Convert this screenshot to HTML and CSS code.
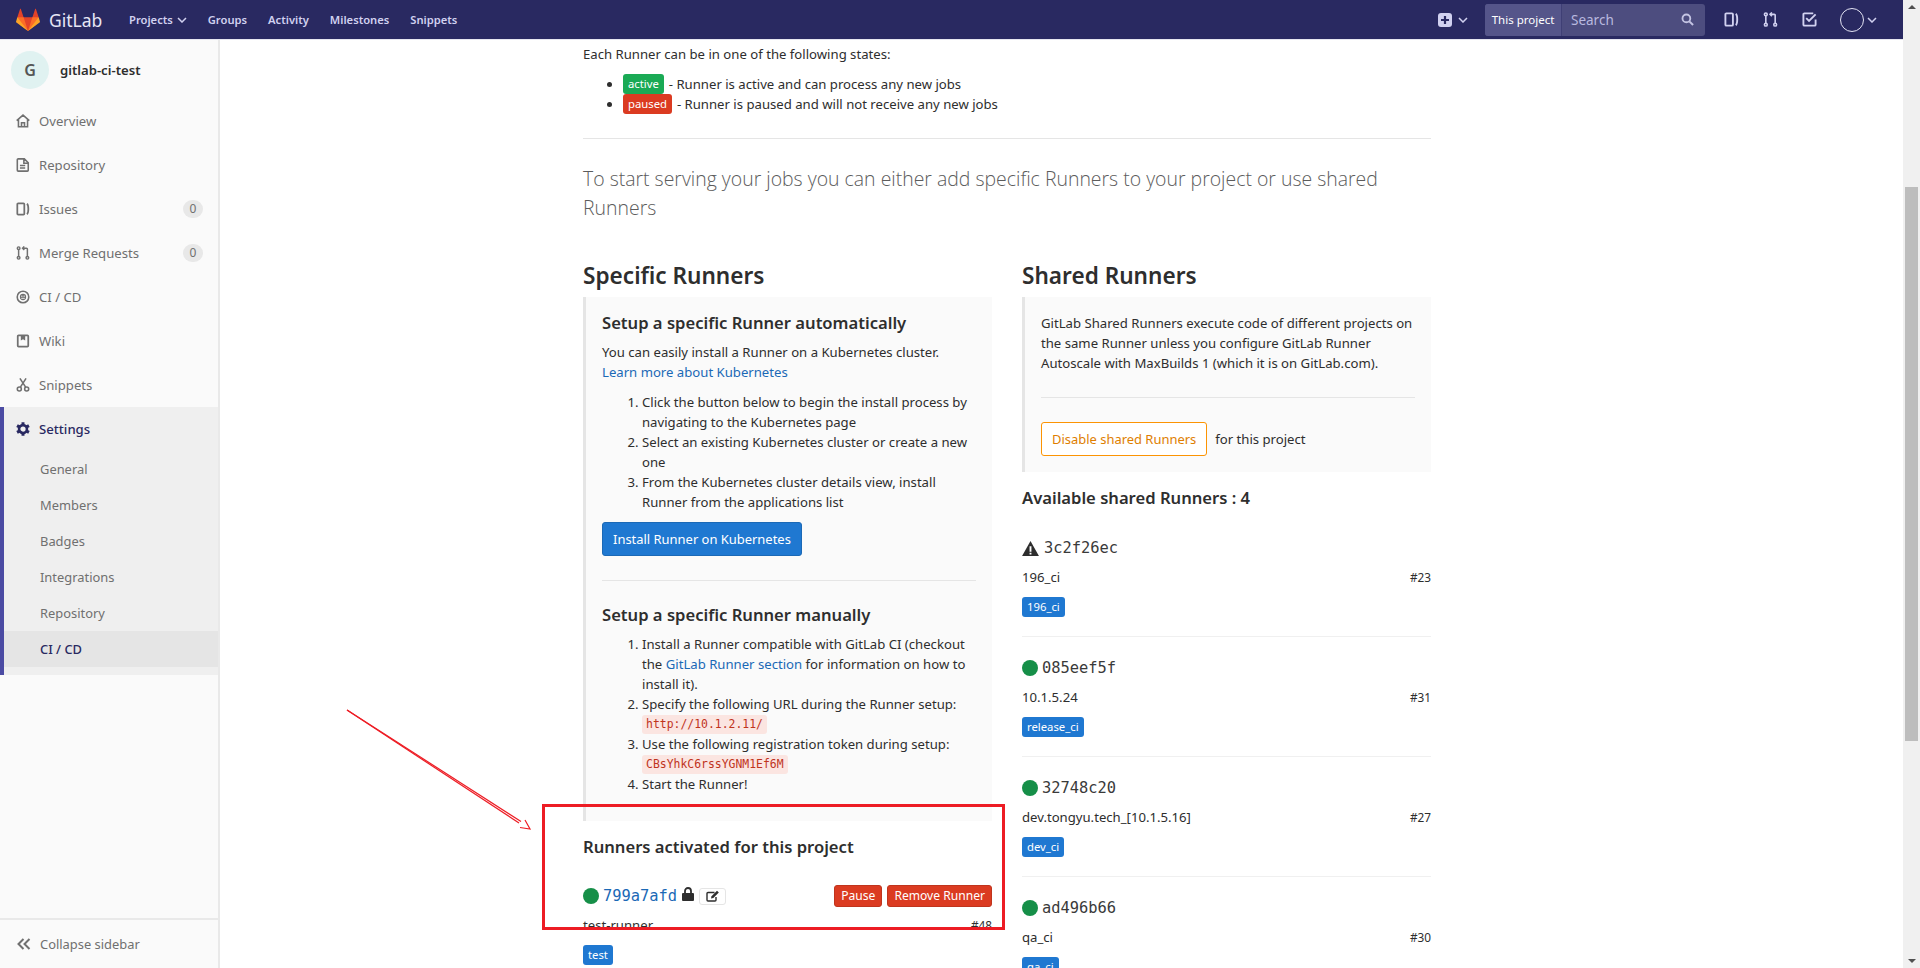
FILE: index.html
```html
<!DOCTYPE html>
<html lang="en">
<head>
  <meta charset="UTF-8">
  <title>CI / CD Settings - gitlab-ci-test</title>
  <link rel="stylesheet" href="styles.css">
</head>
<body>
  <svg class="sprite" width="0" height="0">
    <symbol id="i-issues" viewBox="0 0 16 16"><path fill="none" stroke="currentColor" stroke-width="2" d="M2.5 1.5h6a1 1 0 0 1 1 1v11a1 1 0 0 1-1 1h-6a1 1 0 0 1-1-1v-11a1 1 0 0 1 1-1z"/><path fill="none" stroke="currentColor" stroke-width="2" d="M12.500 2c1.400 1 1.600 2.500 1.600 6s-.2 5-1.600 6"/></symbol>
    <symbol id="i-mr" viewBox="0 0 16 16"><g fill="none" stroke="currentColor" stroke-width="1.700"><circle cx="3" cy="2.500" r="1.500"/><circle cx="3" cy="13.500" r="1.500"/><circle cx="13" cy="13.500" r="1.500"/><path d="M3 4v8M13 12V3.500a1 1 0 0 0-1-1H8"/><path d="M9.500 .5l-2 2 2 2"/></g></symbol>
    <symbol id="i-chev" viewBox="0 0 10 6"><path fill="none" stroke="currentColor" stroke-width="1.500" d="M1 1l4 4 4-4"/></symbol>
  </svg>

  <header class="navbar">
    <a class="brand">
      <svg class="tanuki" viewBox="0 0 36 36">
        <path fill="#e24329" d="M2 14l9.38 9v-9l-4-12.28c-.205-.632-1.176-.632-1.38 0z"/>
        <path fill="#e24329" d="M34 14l-9.38 9v-9l4-12.28c.205-.632 1.176-.632 1.38 0z"/>
        <path fill="#e24329" d="M18,34.38 3,14 33,14 Z"/>
        <path fill="#fc6d26" d="M18,34.38 11.38,14 2,14 6,25Z"/>
        <path fill="#fc6d26" d="M18,34.38 24.62,14 34,14 30,25Z"/>
        <path fill="#fca326" d="M2 14L.1 20.16c-.18.565 0 1.2.5 1.56l17.42 12.66z"/>
        <path fill="#fca326" d="M34 14l1.9 6.16c.18.565 0 1.2-.5 1.56L18 34.38z"/>
      </svg>
      <span class="brand-name">GitLab</span>
    </a>
    <nav class="nav-links">
      <a>Projects <svg class="chev"><use href="#i-chev"/></svg></a>
      <a>Groups</a>
      <a>Activity</a>
      <a>Milestones</a>
      <a>Snippets</a>
    </nav>
    <div class="nav-right">
      <svg class="plus" viewBox="0 0 14 14"><rect width="14" height="14" rx="3" fill="#d1d1f0"/><path d="M7 3v8M3 7h8" stroke="#292961" stroke-width="2.200"/></svg>
      <svg class="chev chev-plus"><use href="#i-chev"/></svg>
      <div class="search">
        <span class="search-scope">This project</span>
        <span class="search-input">Search</span>
        <svg class="search-icon" viewBox="0 0 14 14"><circle cx="5.800" cy="5.800" r="4.200" fill="none" stroke="currentColor" stroke-width="2"/><path d="M9 9l4 4" stroke="currentColor" stroke-width="2.200"/></svg>
      </div>
      <svg class="nav-icon ni-issues"><use href="#i-issues"/></svg>
      <svg class="nav-icon ni-mr"><use href="#i-mr"/></svg>
      <svg class="nav-icon ni-todo" viewBox="0 0 16 16"><path fill="none" stroke="currentColor" stroke-width="2" d="M12 1.500H2.500a1 1 0 0 0-1 1v11a1 1 0 0 0 1 1h11a1 1 0 0 0 1-1V8"/><path fill="none" stroke="currentColor" stroke-width="2" d="M4.500 6.500l3 3 7-7"/></svg>
      <span class="nav-avatar"></span>
      <svg class="chev"><use href="#i-chev"/></svg>
    </div>
  </header>

  <div class="layout">
    <aside class="sidebar">
      <div class="project">
        <span class="project-avatar">G</span>
        <span class="project-name">gitlab-ci-test</span>
      </div>
      <ul class="side-nav">
        <li><svg class="side-icon" viewBox="0 0 16 16"><path fill="none" stroke="currentColor" stroke-width="1.800" d="M.8 7.500L8 1.300l7.200 6.200M2.800 6v8.500h10.400V6M6.300 14.500v-4.500h3.400v4.500"/></svg>Overview</li>
        <li><svg class="side-icon" viewBox="0 0 16 16"><path fill="none" stroke="currentColor" stroke-width="1.800" d="M2.500 1h7L14 5.500V14a1 1 0 0 1-1 1H2.500a1 1 0 0 1-1-1V2a1 1 0 0 1 1-1zM9 1v5h5M4.500 8.500h6M4.500 11.500h6"/></svg>Repository</li>
        <li><svg class="side-icon"><use href="#i-issues"/></svg>Issues<span class="count">0</span></li>
        <li><svg class="side-icon"><use href="#i-mr"/></svg>Merge Requests<span class="count">0</span></li>
        <li><svg class="side-icon" viewBox="0 0 16 16"><circle cx="8" cy="8" r="6.600" fill="none" stroke="currentColor" stroke-width="1.800"/><circle cx="8" cy="8" r="3.600" fill="currentColor"/><circle cx="6.700" cy="7" r=".8" fill="#fafafa"/><circle cx="9.300" cy="7" r=".8" fill="#fafafa"/><path d="M6 9.500h4" stroke="#fafafa"/></svg>CI / CD</li>
        <li><svg class="side-icon" viewBox="0 0 16 16"><path fill="none" stroke="currentColor" stroke-width="2" d="M3 1.500h10a1 1 0 0 1 1 1v11a1 1 0 0 1-1 1H3a1 1 0 0 1-1-1v-11a1 1 0 0 1 1-1z"/><path fill="currentColor" d="M5.500 1.500h5v6l-2.500-1.500-2.500 1.500z"/></svg>Wiki</li>
        <li><svg class="side-icon" viewBox="0 0 16 16"><g fill="none" stroke="currentColor" stroke-width="1.800"><circle cx="3.800" cy="12.500" r="2.300"/><circle cx="12.200" cy="12.500" r="2.300"/><path d="M5 10.500L11.500 .5M11 10.500L4.500 .5"/></g></svg>Snippets</li>
      </ul>
      <div class="settings">
        <div class="settings-head"><svg class="side-icon" viewBox="0 0 16 16"><circle cx="8" cy="8" r="4.500" fill="none" stroke="currentColor" stroke-width="3"/><path stroke="currentColor" stroke-width="3.400" d="M8 .2v3M8 12.800v3M1.200 4.100l2.600 1.500M12.200 10.400l2.600 1.500M1.200 11.900l2.600-1.500M12.200 5.600l2.600-1.500"/></svg>Settings</div>
        <a>General</a>
        <a>Members</a>
        <a>Badges</a>
        <a>Integrations</a>
        <a>Repository</a>
        <a class="current">CI / CD</a>
      </div>
      <div class="collapse">
        <svg class="collapse-icon" viewBox="0 0 14 12"><path fill="none" stroke="currentColor" stroke-width="2" d="M6.500 1L1.500 6l5 5M12.500 1l-5 5 5 5"/></svg>Collapse sidebar
      </div>
    </aside>

    <main class="content">
      <p class="states-intro">Each Runner can be in one of the following states:</p>
      <ul class="states">
        <li><span class="label label-green state-label">active</span> - Runner is active and can process any new jobs</li>
        <li><span class="label label-red state-label">paused</span> - Runner is paused and will not receive any new jobs</li>
      </ul>
      <hr>
      <p class="lead">To start serving your jobs you can either add specific Runners to your project or use shared Runners</p>

      <div class="columns">
        <section>
          <h3>Specific Runners</h3>
          <div class="well well-specific">
            <h4>Setup a specific Runner automatically</h4>
            <p>You can easily install a Runner on a Kubernetes cluster.<br><a class="link">Learn more about Kubernetes</a></p>
            <ol>
              <li>Click the button below to begin the install process by navigating to the Kubernetes page</li>
              <li>Select an existing Kubernetes cluster or create a new one</li>
              <li>From the Kubernetes cluster details view, install Runner from the applications list</li>
            </ol>
            <button class="btn btn-blue">Install Runner on Kubernetes</button>
            <hr class="rule-well">
            <h4>Setup a specific Runner manually</h4>
            <ol class="manual">
              <li>Install a Runner compatible with GitLab CI (checkout the <a class="link">GitLab Runner section</a> for information on how to install it).</li>
              <li>Specify the following URL during the Runner setup:<br><code>http://10.1.2.11/</code></li>
              <li>Use the following registration token during setup:<br><code>CBsYhkC6rssYGNM1Ef6M</code></li>
              <li>Start the Runner!</li>
            </ol>
          </div>
          <h4 class="activated">Runners activated for this project</h4>
          <div class="runner-top">
            <span class="dot"></span>
            <a class="hash hash-link">799a7afd</a>
            <svg class="lock" viewBox="0 0 12 14"><path fill="currentColor" d="M1 6h10a1 1 0 0 1 1 1v6a1 1 0 0 1-1 1H1a1 1 0 0 1-1-1V7a1 1 0 0 1 1-1z"/><path fill="none" stroke="currentColor" stroke-width="1.800" d="M3 6V4a3 3 0 0 1 6 0v2"/></svg>
            <span class="edit"><svg viewBox="0 0 14 12"><path fill="none" stroke="currentColor" stroke-width="1.400" d="M8.500 2.500H2a1 1 0 0 0-1 1V10a1 1 0 0 0 1 1h7a1 1 0 0 0 1-1V7"/><path fill="currentColor" d="M5 8.500l.5-2.200L11 .8l1.800 1.700-5.500 5.500z"/></svg></span>
            <span class="runner-actions">
              <button class="btn-red">Pause</button>
              <button class="btn-red">Remove Runner</button>
            </span>
          </div>
          <div class="runner-meta"><span>test-runner</span><span class="small">#48</span></div>
          <span class="label label-blue">test</span>
        </section>

        <section>
          <h3>Shared Runners</h3>
          <div class="well well-shared">
            <p>GitLab Shared Runners execute code of different projects on the same Runner unless you configure GitLab Runner Autoscale with MaxBuilds 1 (which it is on GitLab.com).</p>
            <hr class="rule-shared">
            <button class="btn btn-warning">Disable shared Runners</button><span class="for-project">for this project</span>
          </div>
          <h4 class="available">Available shared Runners : 4</h4>
          <div class="runner first-runner">
            <div class="runner-title"><svg class="warn" viewBox="0 0 18 16"><path fill="currentColor" fill-rule="evenodd" d="M9 0l9 16H0zM8 5.500h2v6H8zM8 12.500h2v2H8z"/></svg><span class="hash">3c2f26ec</span></div>
            <div class="runner-meta"><span>196_ci</span><span class="small">#23</span></div>
            <span class="label label-blue">196_ci</span>
          </div>
          <div class="runner">
            <div class="runner-title"><span class="dot"></span><span class="hash">085eef5f</span></div>
            <div class="runner-meta"><span>10.1.5.24</span><span class="small">#31</span></div>
            <span class="label label-blue">release_ci</span>
          </div>
          <div class="runner">
            <div class="runner-title"><span class="dot"></span><span class="hash">32748c20</span></div>
            <div class="runner-meta"><span>dev.tongyu.tech_[10.1.5.16]</span><span class="small">#27</span></div>
            <span class="label label-blue">dev_ci</span>
          </div>
          <div class="runner">
            <div class="runner-title"><span class="dot"></span><span class="hash">ad496b66</span></div>
            <div class="runner-meta"><span>qa_ci</span><span class="small">#30</span></div>
            <span class="label label-blue">qa_ci</span>
          </div>
        </section>
      </div>
    </main>

    <div class="scrollbar">
      <span class="arrow-up"></span>
      <span class="thumb"></span>
      <span class="arrow-down"></span>
    </div>
  </div>

  <svg class="annotation" width="1920" height="968" viewBox="0 0 1920 968">
    <rect x="543.500" y="805.500" width="460" height="123" fill="none" stroke="#ed1c24" stroke-width="3"/>
    <path d="M347 710L519 823" fill="none" stroke="#ed1c24" stroke-width="1.200"/>
    <path d="M347 710L521 821.500" fill="none" stroke="#ed1c24" stroke-width="1.200"/>
    <path d="M520 827.500L530 829L525 820" fill="#fff" stroke="#ed1c24" stroke-width="1.200"/>
  </svg>
</body>
</html>
```

FILE: styles.css
```css
html, body {
  margin: 0;
  height: 968px;
  overflow: hidden;
}

body {
  font-family: "Noto Sans", "Open Sans", Arial, sans-serif;
  font-size: 13.150px;
  line-height: 20px;
  color: #2e2e2e;
  background-color: #fff;
}

a {
  cursor: pointer;
}

.sprite {
  display: block;
  height: 0;
}

/* top bar */
.navbar {
  display: flex;
  align-items: center;
  box-sizing: border-box;
  height: 40px;
  padding-left: 16px;
  background-color: #292961;
  border-bottom: 1px solid #e6e6f0;
  color: #d1d1f0;
}

.brand {
  display: flex;
  align-items: center;
  width: 113px;
  color: #fff;
}

.tanuki {
  width: 24px;
  height: 24px;
}

.brand-name {
  margin-left: 9px;
  font-size: 17.500px;
  color: #e6e6f5;
}

.nav-links {
  display: flex;
  font-size: 11.200px;
  font-weight: 600;
}

.nav-links a {
  margin-right: 21px;
  white-space: nowrap;
}

.chev {
  width: 10px;
  height: 6px;
  margin-left: 3px;
  vertical-align: 1px;
}

.nav-links .chev {
  margin-left: 1px;
}

.nav-right {
  display: flex;
  align-items: center;
  margin-left: auto;
  width: 482px;
  height: 100%;
}

.plus {
  width: 14px;
  height: 14px;
}

.chev-plus {
  margin: 1px 0 0 6px;
}

.search {
  display: flex;
  align-items: center;
  box-sizing: border-box;
  width: 220px;
  height: 32px;
  margin-left: 17px;
  background-color: #4d4d7f;
  border-radius: 3px;
}

.search-scope {
  width: 76px;
  height: 100%;
  flex-shrink: 0;
  line-height: 32px;
  text-align: center;
  font-size: 11.500px;
  color: #fff;
  background-color: #55558a;
  border-right: 1px solid #3f3f75;
  border-radius: 3px 0 0 3px;
}

.search-input {
  margin-left: 9px;
  color: #b9b9df;
  font-size: 13.500px;
}

.search-icon {
  width: 13px;
  height: 13px;
  margin-left: auto;
  margin-right: 11px;
  color: #c4c4e3;
}

.nav-icon {
  width: 15px;
  height: 15px;
}

.ni-issues {
  margin-left: 19px;
}

.ni-mr {
  margin-left: 24px;
}

.ni-todo {
  margin-left: 24px;
}

.nav-avatar {
  box-sizing: border-box;
  width: 24px;
  height: 24px;
  margin-left: 23px;
  border: 1px solid #e3e3f3;
  border-radius: 50%;
}

/* page */
.layout {
  display: flex;
  height: 928px;
}

.sidebar {
  display: flex;
  flex-direction: column;
  box-sizing: border-box;
  width: 220px;
  flex-shrink: 0;
  background-color: #fafafa;
  border-right: 2px solid #e9e9e9;
  color: #707070;
}

.project {
  display: flex;
  align-items: center;
  height: 59px;
  padding-left: 11px;
}

.project-avatar {
  width: 38px;
  height: 38px;
  border-radius: 50%;
  background-color: #e0f2f1;
  color: #555;
  font-size: 16px;
  font-weight: 600;
  line-height: 38px;
  text-align: center;
}

.project-name {
  margin-left: 11px;
  color: #2e2e2e;
  font-weight: 600;
}

.side-nav {
  list-style: none;
  margin: 0;
  padding: 0;
}

.side-nav li {
  display: flex;
  align-items: center;
  height: 44px;
  padding: 0 15px 0 16px;
}

.side-icon {
  width: 14px;
  height: 14px;
  margin-right: 9px;
  flex-shrink: 0;
}

.count {
  width: 20px;
  height: 18px;
  margin-left: auto;
  border-radius: 9px;
  background-color: #e8e8e8;
  font-size: 12px;
  line-height: 18px;
  text-align: center;
}

.settings {
  padding-bottom: 8px;
  background-color: #efefef;
  border-left: 4px solid #4b4ba3;
}

.settings-head {
  display: flex;
  align-items: center;
  height: 44px;
  padding-left: 12px;
  color: #292961;
  font-weight: 500;
}

.settings a {
  display: block;
  height: 36px;
  padding-left: 36px;
  line-height: 36px;
  font-size: 12.900px;
}

.settings a.current {
  background-color: #e5e5e5;
  color: #292961;
  font-weight: 500;
}

.collapse {
  display: flex;
  align-items: center;
  height: 48px;
  margin-top: auto;
  padding-left: 17px;
  border-top: 2px solid #e9e9e9;
  font-size: 12.900px;
}

.collapse-icon {
  width: 14px;
  height: 12px;
  margin-right: 9px;
}

.content {
  width: 848px;
  padding: 4px 472px 0 363px;
  overflow: hidden;
  flex-shrink: 0;
}

.states-intro {
  margin: 0 0 10px;
}

.states {
  margin: 0 0 24px;
  padding-left: 40px;
}

.label {
  display: inline-block;
  height: 20px;
  padding: 0 5px;
  border-radius: 3px;
  color: #fff;
  font-size: 11.300px;
  line-height: 20px;
  vertical-align: top;
}

.state-label {
  margin-right: 1.500px;
}

.label-green {
  background-color: #1aaa55;
}

.label-red {
  background-color: #db3b21;
}

.label-blue {
  background-color: #1f78d1;
}

hr {
  border: 0;
  border-top: 1px solid #e5e5e5;
  margin: 0;
}

.lead {
  margin: 25px 0 38px;
  font-family: "Open Sans", "Noto Sans", sans-serif;
  font-size: 19.450px;
  line-height: 29px;
  font-weight: 300;
  color: #5c5c5c;
}

.columns {
  display: grid;
  grid-template-columns: 409px 409px;
  column-gap: 30px;
}

h3 {
  margin: 0 0 5px;
  font-size: 22.600px;
  line-height: 32px;
  font-weight: 600;
}

h4 {
  margin: 0;
  font-size: 16.600px;
  line-height: 24px;
  font-weight: 600;
}

.well {
  box-sizing: border-box;
  background-color: #fafafa;
  border-left: 3px solid #e5e5e5;
  padding-left: 16px;
  padding-right: 16px;
}

.well p {
  margin: 0;
}

.well-specific {
  height: 524px;
  padding-top: 14px;
}

.well-specific p {
  margin-top: 7px;
}

.well ol {
  margin: 10px 0;
  padding-left: 40px;
}

.well ol.manual {
  margin-top: 7px;
}

.link {
  color: #1b69b6;
}

code {
  display: inline-block;
  height: 19px;
  padding: 0 4px;
  margin-top: 1px;
  background-color: #fbe5e1;
  border-radius: 3px;
  color: #c0341d;
  font-family: "DejaVu Sans Mono", monospace;
  font-size: 11.430px;
  line-height: 19px;
  vertical-align: top;
}

.btn {
  display: block;
  height: 34px;
  box-sizing: border-box;
  padding: 0 10px;
  border-radius: 3px;
  font: inherit;
  font-size: 12.950px;
  line-height: 32px;
}

.btn-blue {
  background-color: #1f78d1;
  border: 1px solid #1b69b6;
  color: #fff;
}

.rule-well {
  margin: 24px 0 22px;
}

.well-shared {
  height: 175px;
  padding-top: 16px;
}

.rule-shared {
  margin: 24px 0;
}

.btn-warning {
  display: inline-block;
  background-color: #fff;
  border: 1px solid #fc9403;
  color: #de7e00;
}

.for-project {
  margin-left: 8px;
}

.available {
  margin-top: 14px;
}

.activated {
  margin-top: 14px;
}

.runner-top {
  display: flex;
  align-items: center;
  height: 24px;
  margin-top: 25px;
}

.dot {
  width: 16px;
  height: 16px;
  margin-right: 4px;
  border-radius: 50%;
  background-color: #168f48;
  flex-shrink: 0;
}

.hash {
  font-family: "DejaVu Sans Mono", monospace;
  font-size: 15.400px;
  color: #3a3a3a;
}

.hash-link {
  color: #1b69b6;
}

.lock {
  width: 12px;
  height: 14px;
  margin: -4px 0 0 5px;
}

.edit {
  display: flex;
  align-items: center;
  justify-content: center;
  box-sizing: border-box;
  width: 27px;
  height: 17px;
  margin-left: 5px;
  border: 1px solid #e5e5e5;
  border-radius: 3px;
  background-color: #fff;
}

.edit svg {
  width: 14px;
  height: 12px;
}

.runner-actions {
  display: flex;
  gap: 5px;
  margin-left: auto;
}

.btn-red {
  height: 22px;
  padding: 0 6px;
  border: 1px solid #c0341d;
  border-radius: 3px;
  background-color: #db3b21;
  color: #fff;
  font: inherit;
  font-size: 12.100px;
  line-height: 20px;
}

.runner-meta {
  display: flex;
  justify-content: space-between;
  margin: 7px 0 10px;
}

.small {
  font-size: 11.800px;
}

.runner {
  box-sizing: border-box;
  height: 120px;
  padding-top: 19px;
  border-bottom: 1px solid #f0f0f0;
}

.first-runner {
  height: 127px;
  padding-top: 26px;
}

.runner-title {
  display: flex;
  align-items: center;
  height: 24px;
}

.warn {
  width: 17px;
  height: 15px;
  margin-right: 5px;
}

/* browser scrollbar */
.scrollbar {
  position: relative;
  width: 17px;
  flex-shrink: 0;
  margin-top: -40px;
  background-color: #f0f0f0;
}

.thumb {
  position: absolute;
  left: 2px;
  top: 187px;
  width: 13px;
  height: 554px;
  background-color: #bdbdbd;
}

.arrow-up,
.arrow-down {
  position: absolute;
  left: 5px;
  border-left: 4px solid transparent;
  border-right: 4px solid transparent;
}

.arrow-up {
  top: 5px;
  border-bottom: 4px solid #505050;
}

.arrow-down {
  bottom: 5px;
  border-top: 4px solid #505050;
}

/* markup drawn on top of the screenshot */
.annotation {
  position: absolute;
  left: 0;
  top: 0;
  pointer-events: none;
}
```
